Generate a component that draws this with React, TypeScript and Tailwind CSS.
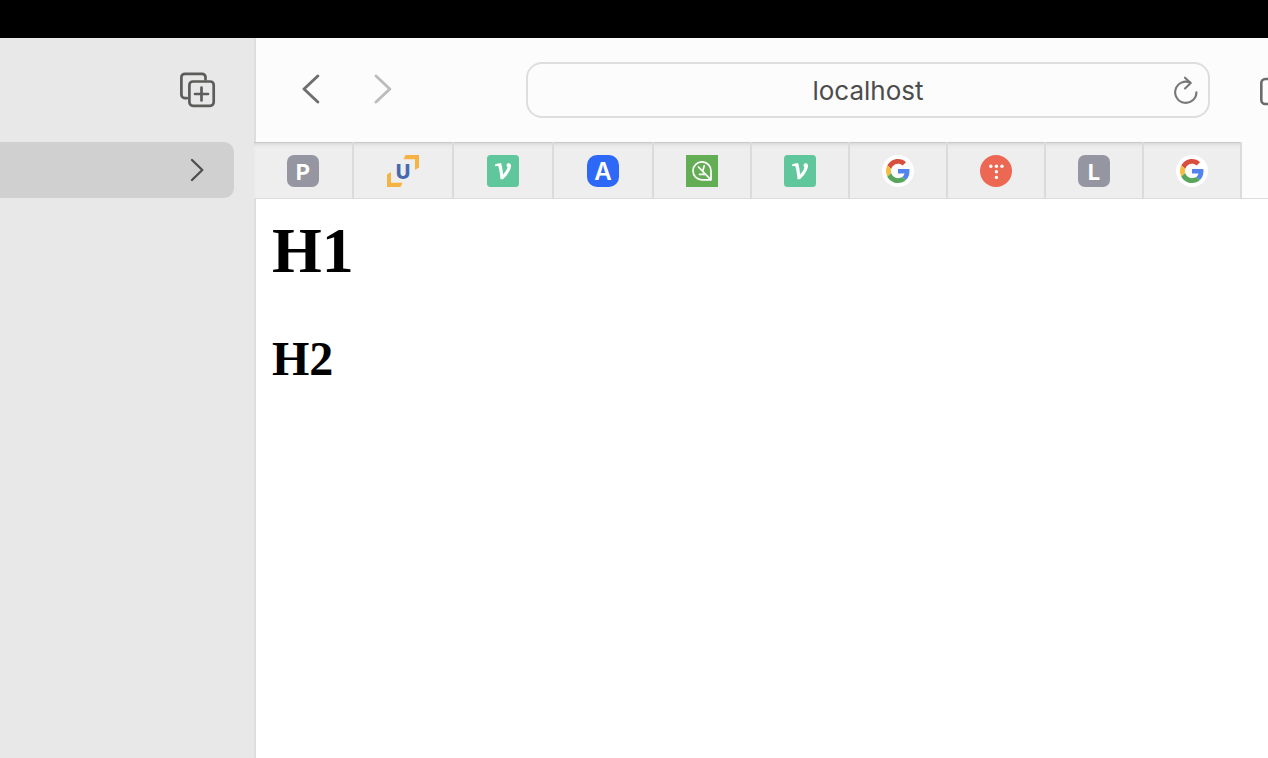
import type { ReactNode } from "react";

function LetterTile({ letter }: { letter: string }) {
  return (
    <span className="flex size-8 items-center justify-center rounded-[7px] bg-[#9596a1] pt-0.5 text-[22px] leading-8 font-bold text-white">
      {letter}
    </span>
  );
}

function CornersIcon() {
  return (
    <span className="relative flex size-8 items-center justify-center pt-0.5">
      <svg viewBox="0 0 32 32" className="absolute inset-0 size-8" aria-hidden="true">
        <path d="M18.500 0H32V12.500L28 15V4.300H16.500Z" fill="#f4b344" />
        <path d="M0 19.500L4 17V27.700H15.500L13.500 32H0Z" fill="#f4b344" />
      </svg>
      <span className="relative text-[20px] leading-8 font-extrabold text-[#4769ae]">U</span>
    </span>
  );
}

function VTile() {
  return (
    <svg viewBox="0 0 32 32" className="size-8" role="img" aria-label="V">
      <rect width="32" height="32" rx="3.500" fill="#60c79c" />
      <path
        d="M8 9.600C9.800 8.700 12 8.300 14.200 8.300C15.200 11.800 15.800 15.500 16.100 19.500C18.400 17 20 14.400 20.500 12.100C19.900 11.700 19.400 11 19.500 10C19.700 8.700 20.900 8 22.100 8.200C23.700 8.500 24.300 10 23.900 12C23 16.200 19.500 21.200 15.900 24.200H13.500C13.100 19.300 12.400 14.700 11.300 11C10.300 11 9.300 11.100 8.300 11.300Z"
        fill="#fff"
      />
    </svg>
  );
}

function ATile() {
  return (
    <span className="flex size-8 items-center justify-center rounded-[10px] bg-[#2d68f7] pt-0.5 text-[24px] leading-8 font-semibold text-white">
      A
    </span>
  );
}

function LeafIcon() {
  return (
    <svg viewBox="0 0 32 32" className="size-8" fill="none" stroke="#fff" strokeWidth="1.700" aria-hidden="true">
      <rect width="32" height="32" fill="#63ae55" stroke="none" />
      <path d="M25 24.800H16A9 9 0 1 1 25 16Z" strokeLinejoin="round" />
      <path d="M12.500 12L24.500 24.300M18.200 10.800L16.800 16M13.500 19.300H19.500" strokeLinecap="round" />
    </svg>
  );
}

function GoogleIcon() {
  return (
    <span className="flex size-8 items-center justify-center rounded-full bg-white">
      <svg viewBox="0 0 48 48" className="size-6" aria-hidden="true">
        <path fill="#d94f3d" d="M24 9.500c3.540 0 6.710 1.220 9.210 3.600l6.850-6.850C35.900 2.380 30.470 0 24 0 14.620 0 6.510 5.380 2.560 13.220l7.980 6.190C12.430 13.720 17.740 9.500 24 9.500z" />
        <path fill="#5383ec" d="M46.980 24.550c0-1.570-.15-3.090-.38-4.550H24v9.020h12.940c-.58 2.960-2.260 5.480-4.780 7.180l7.730 6c4.510-4.180 7.090-10.360 7.090-17.650z" />
        <path fill="#f3bd42" d="M10.530 28.590c-.48-1.450-.76-2.990-.76-4.590s.27-3.140.76-4.590l-7.980-6.190C.92 16.460 0 20.120 0 24c0 3.880.92 7.540 2.560 10.780l7.970-6.190z" />
        <path fill="#58a55c" d="M24 48c6.480 0 11.930-2.130 15.890-5.810l-7.730-6c-2.150 1.450-4.920 2.300-8.160 2.300-6.260 0-11.570-4.220-13.470-9.910l-7.980 6.190C6.510 42.620 14.620 48 24 48z" />
      </svg>
    </span>
  );
}

function DotsIcon() {
  return (
    <svg viewBox="0 0 32 32" className="size-8" fill="#fff" aria-hidden="true">
      <circle cx="16" cy="16" r="16" fill="#ec6853" />
      <circle cx="10.800" cy="11.200" r="1.700" />
      <circle cx="16.400" cy="11.200" r="1.700" />
      <circle cx="22" cy="11.200" r="1.700" />
      <circle cx="16.400" cy="16.800" r="1.700" />
      <circle cx="16.400" cy="22.400" r="1.700" />
    </svg>
  );
}

const wideTabs: { name: string; icon: ReactNode }[] = [
  { name: "P", icon: <LetterTile letter="P" /> },
  { name: "U", icon: <CornersIcon /> },
  { name: "V", icon: <VTile /> },
  { name: "A", icon: <ATile /> },
];

const narrowTabs: { name: string; icon: ReactNode }[] = [
  { name: "Leaf", icon: <LeafIcon /> },
  { name: "V", icon: <VTile /> },
  { name: "Google", icon: <GoogleIcon /> },
  { name: "Dots", icon: <DotsIcon /> },
  { name: "L", icon: <LetterTile letter="L" /> },
  { name: "Google", icon: <GoogleIcon /> },
];

function Chevron({ className, d, strokeWidth }: { className: string; d: string; strokeWidth: number }) {
  return (
    <svg
      viewBox="0 0 20 32"
      className={className}
      fill="none"
      stroke="currentColor"
      strokeWidth={strokeWidth}
      strokeLinecap="round"
      strokeLinejoin="round"
      aria-hidden="true"
    >
      <path d={d} />
    </svg>
  );
}

function Sidebar() {
  return (
    <aside className="w-[254px] shrink-0 bg-[#e8e8e8]">
      <div className="flex h-[104px] items-center justify-end pr-[38px]">
        <button aria-label="New tab group">
          <svg
            viewBox="0 0 36 36"
            className="size-9"
            fill="none"
            stroke="#5c5c5b"
            strokeWidth="2.700"
            strokeLinecap="round"
            strokeLinejoin="round"
            aria-hidden="true"
          >
            <path d="M6.800 26.200H4.800A3.500 3.500 0 0 1 1.400 22.700V5.300A3.500 3.500 0 0 1 4.900 1.800H22A3.500 3.500 0 0 1 25.500 5.300V7.500" />
            <rect x="9.400" y="9.500" width="24.300" height="24.300" rx="3.500" />
            <path d="M21.500 15.500V28.500M15 22H28" />
          </svg>
        </button>
      </div>
      <button
        aria-label="Open tab group"
        className="mr-5 flex h-14 w-[234px] items-center justify-end rounded-r-[10px] bg-[#d0d0d0] pr-[27px] text-[#4d4d4d]"
      >
        <Chevron className="h-8 w-5" d="M5 6L15.300 16L5 26" strokeWidth={2.3} />
      </button>
    </aside>
  );
}

function Toolbar() {
  return (
    <div className="flex h-[104px] items-center border-l-2 border-[#dedede] bg-[#fcfcfc]">
      <button aria-label="Back" className="ml-[46px] text-[#6e6e6e]">
        <Chevron className="h-8 w-5" d="M15.800 2L2 15L15.800 28" strokeWidth={2.9} />
      </button>
      <button aria-label="Forward" className="ml-[51px] text-[#bcbcbc]">
        <Chevron className="h-8 w-5" d="M3 2L16.800 15L3 28" strokeWidth={2.9} />
      </button>
      <div className="relative ml-[133px] flex-1">
        <input
          type="text"
          aria-label="Address"
          defaultValue="localhost"
          className="block h-14 w-full rounded-[16px] border-2 border-[#dedede] bg-[#fcfcfc] px-12 text-center text-[26px] text-[#4c4c4c] outline-none"
        />
        <button aria-label="Reload" className="absolute top-3 right-2 text-[#777]">
          <svg
            viewBox="0 0 32 32"
            className="size-8"
            fill="none"
            stroke="currentColor"
            strokeWidth="2.100"
            strokeLinecap="round"
            strokeLinejoin="round"
            aria-hidden="true"
          >
            <path d="M26.400 18.200A10.600 10.600 0 1 1 20.300 8.700" />
            <path d="M15 3.700L20.700 9.100L15 14.500" />
          </svg>
        </button>
      </div>
      <button aria-label="Share" className="ml-[50px] w-2 overflow-hidden">
        <svg viewBox="0 0 36 36" className="size-9" fill="none" stroke="#6b6b6b" strokeWidth="2.600" aria-hidden="true">
          <rect x="1.300" y="7" width="26" height="25" rx="4" />
        </svg>
      </button>
    </div>
  );
}

function TabBar() {
  return (
    <nav className="flex h-[57px] border-b border-[#dcdcdc] bg-[#fcfcfc]">
      <div className="flex bg-[#eeeeee] shadow-[inset_0_1px_0_#c9c9c9,inset_0_4px_4px_-2px_#d2d2d2]">
        {wideTabs.map((tab) => (
          <button
            key={tab.name}
            aria-label={tab.name}
            className="flex w-[100px] items-center justify-center border-r-2 border-[#dbdbdb] pt-0.5"
          >
            {tab.icon}
          </button>
        ))}
        {narrowTabs.map((tab, index) => (
          <button
            key={index}
            aria-label={tab.name}
            className="flex w-[98px] items-center justify-center border-r-2 border-[#dbdbdb] pt-0.5"
          >
            {tab.icon}
          </button>
        ))}
      </div>
    </nav>
  );
}

export default function App() {
  return (
    <div className="flex min-h-screen flex-col overflow-hidden bg-white font-['Inter',sans-serif]">
      <div className="h-[38px] bg-black" />
      <div className="flex flex-1">
        <Sidebar />
        <div className="flex min-w-0 flex-1 flex-col">
          <Toolbar />
          <TabBar />
          <main className="flex-1 border-l-2 border-[#dedede] bg-white px-4 pt-4 font-['Liberation_Serif',serif] text-black">
            <h1 className="text-[64px] leading-[72px] font-bold">H1</h1>
            <h2 className="mt-11 text-[48px] leading-[56px] font-bold">H2</h2>
          </main>
        </div>
      </div>
    </div>
  );
}
